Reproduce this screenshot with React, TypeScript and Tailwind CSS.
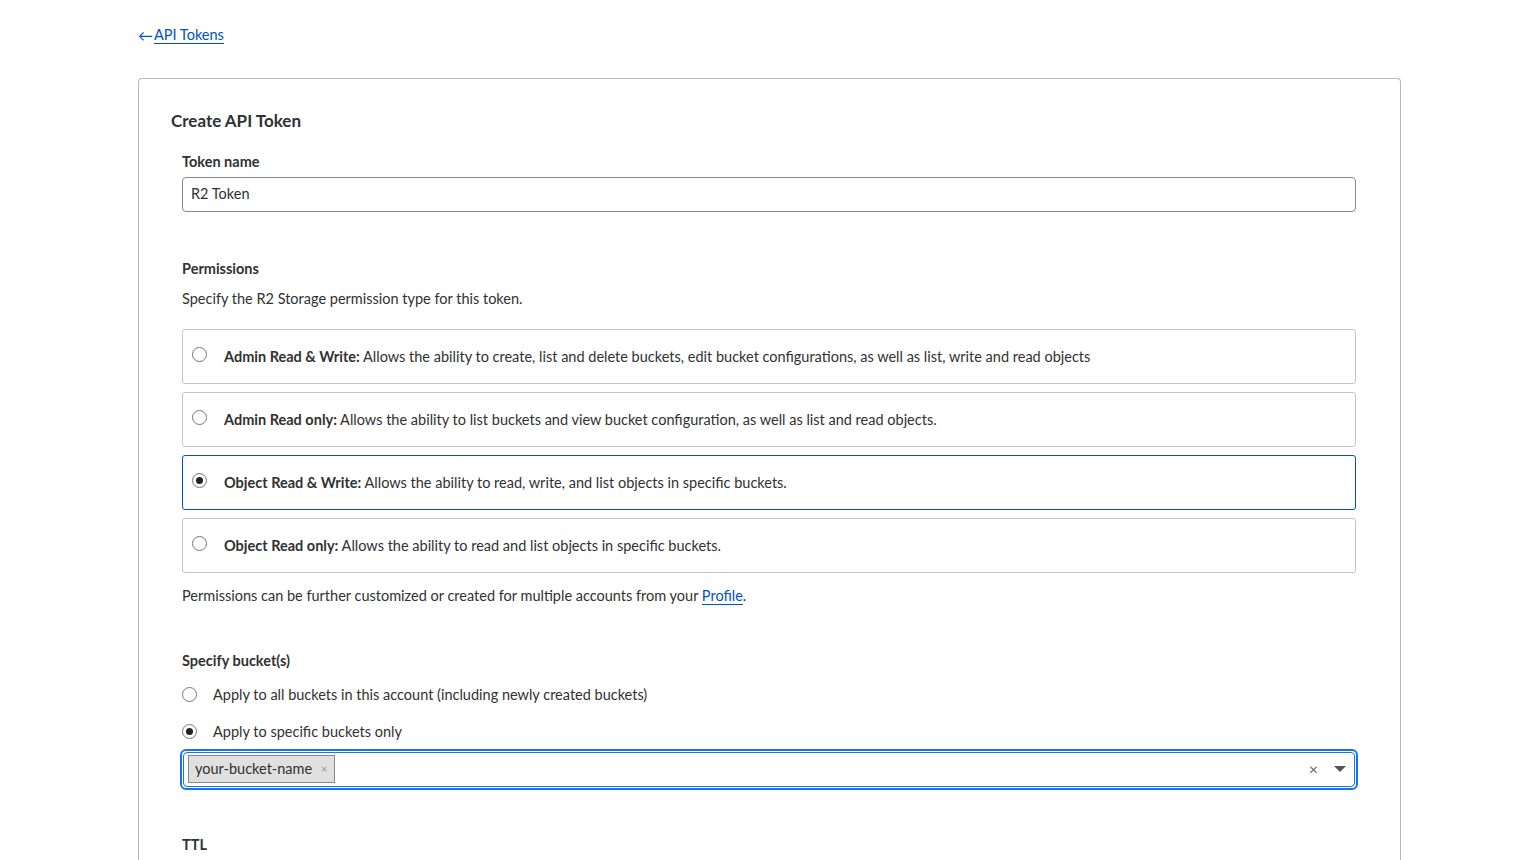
import React from "react";

const opts = [
  ["Admin Read & Write:", "Allows the ability to create, list and delete buckets, edit bucket configurations, as well as list, write and read objects"],
  ["Admin Read only:", "Allows the ability to list buckets and view bucket configuration, as well as list and read objects."],
  ["Object Read & Write:", "Allows the ability to read, write, and list objects in specific buckets."],
  ["Object Read only:", "Allows the ability to read and list objects in specific buckets."],
];

function Radio({ on }: { on?: boolean }) {
  return (
    <span className="w-[15px] h-[15px] rounded-full border border-[#767676] bg-white flex items-center justify-center shrink-0">
      {on && <span className="w-[7px] h-[7px] rounded-full bg-[#222]" />}
    </span>
  );
}

export default function App() {
  return (
    <div className="min-h-[860px] h-[860px] overflow-hidden bg-white text-[#313131] text-[14.5px]" style={{ fontFamily: "Lato, 'Noto Sans', sans-serif" }}>
      <div className="pl-[138px] pr-[119px] pt-[25px]">
        <a className="inline-flex items-center text-[#0051c3] text-[14.5px] h-[18px]">
          <span className="text-[15px] mr-[1px]">←</span>
          <span className="border-b border-[#0051c3] leading-[17px]">API Tokens</span>
        </a>
        <div className="mt-[31px] border border-[#b8b8b8] border-b-0 rounded-t-[4px] h-[800px] px-[32px] pt-[30px]">
          <h1 className="text-[17px] font-bold text-[#313131] leading-[24px]">Create API Token</h1>
          <div className="pl-[11px] pr-[12px]">
            <div className="mt-[20px] font-bold leading-[18px]">Token name</div>
            <div className="mt-[6px] h-[35px] border border-[#8a8a8a] rounded-[4px] flex items-center px-[8px]">R2 Token</div>
            <div className="mt-[48px] font-bold leading-[18px]">Permissions</div>
            <div className="mt-[12px] leading-[18px]">Specify the R2 Storage permission type for this token.</div>
            <div className="mt-[21px] flex flex-col gap-[8px]">
              {opts.map(([b, t], i) => (
                <div key={i} className={`h-[55px] rounded-[3px] border flex items-center pl-[9px] ${i === 2 ? "border-[#0051c3]" : "border-[#c4c4c4]"}`}>
                  <div className="-mt-[3px]"><Radio on={i === 2} /></div>
                  <span className="ml-[17px] mt-[2px]"><b>{b}</b> {t}</span>
                </div>
              ))}
            </div>
            <div className="mt-[14px] leading-[18px]">
              Permissions can be further customized or created for multiple accounts from your{" "}
              <a className="text-[#0051c3] border-b border-[#0051c3]">Profile</a>.
            </div>
            <div className="mt-[47px] font-bold leading-[18px]">Specify bucket(s)</div>
            <div className="mt-[16px] flex items-center gap-[16px] leading-[18px]"><Radio /> Apply to all buckets in this account (including newly created buckets)</div>
            <div className="mt-[19px] flex items-center gap-[16px] leading-[18px]"><Radio on /> Apply to specific buckets only</div>
            <div className="mt-[8px] -mx-[2px] h-[41px] rounded-[6px] border-2 border-[#1a73e8] p-[1px]">
              <div className="h-full rounded-[4px] border border-[#1a73e8] flex items-center pl-[4px] pr-[8px]">
                <span className="h-[28px] bg-[#e0e0e0] border border-[#8a8a8a] flex items-center px-[6px] text-[#313131]">
                  your-bucket-name <span className="ml-[9px] text-[#999] text-[11px]">×</span>
                </span>
                <span className="flex-1" />
                <span className="text-[#666] text-[16px] mr-[16px]">×</span>
                <svg width="12" height="7" viewBox="0 0 12 7"><path d="M0 0h12L6 6z" fill="#555" /></svg>
              </div>
            </div>
            <div className="mt-[46px] font-bold leading-[18px]">TTL</div>
          </div>
        </div>
      </div>
    </div>
  );
}
